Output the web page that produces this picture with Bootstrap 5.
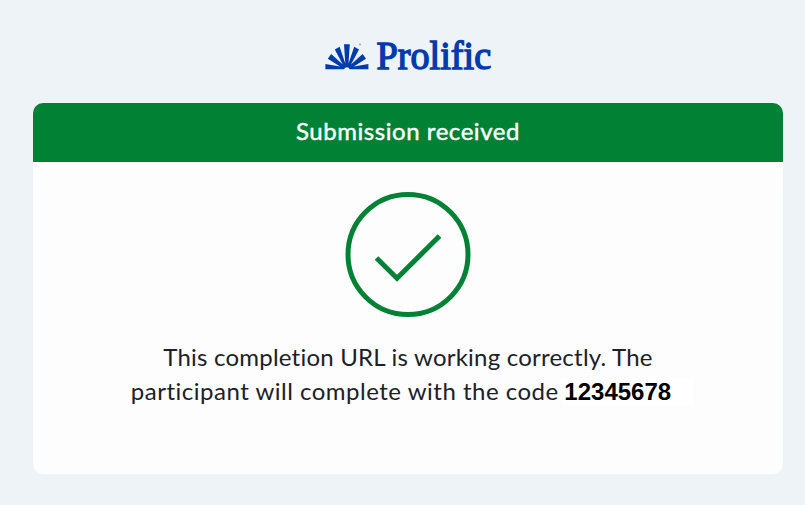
<!DOCTYPE html>
<html lang="en">
<head>
<meta charset="utf-8">
<title>Prolific</title>
<link href="https://cdn.jsdelivr.net/npm/bootstrap@5.3.0/dist/css/bootstrap.min.css" rel="stylesheet">
<style>
body{background:#edf3f6;font-family:Lato,sans-serif;color:#1b2127}
.page-wrap{padding:29px 22px 31px 33px;height:505px}
.brand-logo{width:180px;height:54px;margin:0 auto 20px}
.result-card{height:371px;background:#fdfdfd;border-radius:10px}
.result-head{height:59px;background:#008134;font-size:24px;line-height:56px;-webkit-text-stroke:.45px #fff;letter-spacing:.55px}
.check-icon{margin-top:29px}
.message{font-size:24px;line-height:34px;margin-top:21px}
.code{font:bold 24px/24px "Liberation Sans",sans-serif;color:#000;background:#fff;padding:0 22px 0 2px;margin:0 -8px 0 -3px}
.line-one{letter-spacing:.22px}
.line-two{letter-spacing:.5px}
</style>
</head>
<body>
<main class="page-wrap d-flex flex-column">
<svg class="brand-logo d-block" viewBox="318 29 180 54" fill="#003bad" role="img" aria-label="Prolific">
<path d="M325.4 69.2V64L340 66.6 327.8 58.8 331.2 54 342.8 64.4 334.8 49.6 339.6 46.8 345.3 63.6 344 44.2H349.8L348.5 63.6 354.2 46.8 359 49.6 351 64.400 362.600 54 366 58.800 353.800 66.600 368.400 64V69.200H349.600C349 66.500 344.800 66.500 344.200 69.200Z"/>
<circle cx="360" cy="44.400" r=".9" opacity=".5"/>
<text transform="translate(376.500 69) scale(.98 1)" font-family="Liberation Serif,serif" font-size="39" stroke="#003bad" stroke-width="1.400">Prolific</text>
</svg>
<section class="result-card overflow-hidden text-center">
<header class="result-head text-white">Submission received</header>
<svg class="check-icon d-block mx-auto" width="128" height="128" viewBox="344 191 128 128" fill="none" stroke="#008134" stroke-width="5"><circle cx="408" cy="254.500" r="60"/><path d="M376.500 258 397 278.300 439.500 236"/></svg>
<p class="message mb-0 text-nowrap"><span class="line-one">This completion URL is working correctly. The</span><br><span class="line-two">participant will complete with the code </span><span class="code">12345678</span></p>
</section>
</main>
<script src="https://cdn.jsdelivr.net/npm/bootstrap@5.3.0/dist/js/bootstrap.bundle.min.js"></script>
</body>
</html>
